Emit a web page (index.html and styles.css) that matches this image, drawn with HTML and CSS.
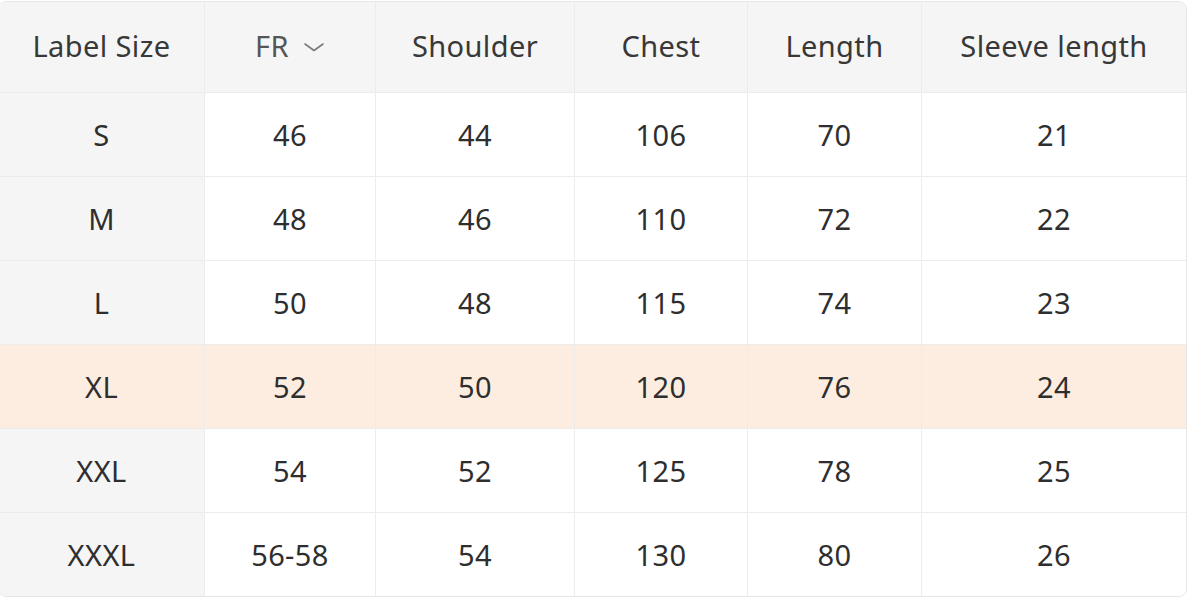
FILE: index.html
```html
<!DOCTYPE html>
<html>
<head>
<meta charset="utf-8">
<link rel="stylesheet" href="styles.css">
</head>
<body>
<div class="wrap">
<table class="size-table">
  <colgroup>
    <col class="c1"><col class="c2"><col class="c3"><col class="c4"><col class="c5"><col class="c6">
  </colgroup>
  <thead>
    <tr>
      <th class="first">Label Size</th>
      <th><span class="fr">FR <svg class="chev" width="22" height="12" viewBox="0 0 22 12"><path d="M2 3 L11 9.5 L20 3" fill="none" stroke="#7a7a7a" stroke-width="1.6" stroke-linecap="round" stroke-linejoin="round"/></svg></span></th>
      <th>Shoulder</th>
      <th>Chest</th>
      <th>Length</th>
      <th>Sleeve length</th>
    </tr>
  </thead>
  <tbody>
    <tr><td class="first">S</td><td>46</td><td>44</td><td>106</td><td>70</td><td>21</td></tr>
    <tr><td class="first">M</td><td>48</td><td>46</td><td>110</td><td>72</td><td>22</td></tr>
    <tr><td class="first">L</td><td>50</td><td>48</td><td>115</td><td>74</td><td>23</td></tr>
    <tr class="hl"><td class="first">XL</td><td>52</td><td>50</td><td>120</td><td>76</td><td>24</td></tr>
    <tr><td class="first">XXL</td><td>54</td><td>52</td><td>125</td><td>78</td><td>25</td></tr>
    <tr><td class="first">XXXL</td><td>56-58</td><td>54</td><td>130</td><td>80</td><td>26</td></tr>
  </tbody>
</table>
</div>
</body>
</html>
```
FILE: styles.css
```css
html, body {
  margin: 0;
  padding: 0;
  background: #ffffff;
}
.wrap {
  padding-top: 1px;
  margin-left: -2px;
  width: 1191px;
}
.size-table {
  width: 1189px;
  border-collapse: separate;
  border-spacing: 0;
  table-layout: fixed;
  border: 1px solid #e6e6e6;
  border-radius: 8px;
  overflow: hidden;
  font-family: "Noto Sans", "Open Sans", sans-serif;
  font-size: 29px;
  line-height: 40px;
  letter-spacing: 0.4px;
  color: #2e2e2e;
}
.c1 { width: 206px; }
.c2 { width: 171px; }
.c3 { width: 199px; }
.c4 { width: 173px; }
.c5 { width: 174px; }
.c6 { width: auto; }
.size-table th,
.size-table td {
  text-align: center;
  vertical-align: middle;
  font-weight: 400;
  padding: 0;
  border-right: 1px solid #ececec;
  border-bottom: 1px solid #ececec;
}
.size-table th:last-child,
.size-table td:last-child {
  border-right: none;
}
.size-table tbody tr:last-child td {
  border-bottom: none;
}
.size-table thead th {
  height: 87px;
  padding-bottom: 3px;
  background: #f5f5f5;
  color: #383838;
}
.size-table tbody td {
  height: 83px;
  background: #ffffff;
}
.size-table tbody td.first {
  background: #f5f5f5;
}
.size-table tbody tr.hl td,
.size-table tbody tr.hl td.first {
  background: #fdede0;
}
.fr {
  display: inline-flex;
  align-items: center;
  gap: 14px;
  color: #555555;
}
.chev {
  display: block;
  margin-top: 3px;
}
```
